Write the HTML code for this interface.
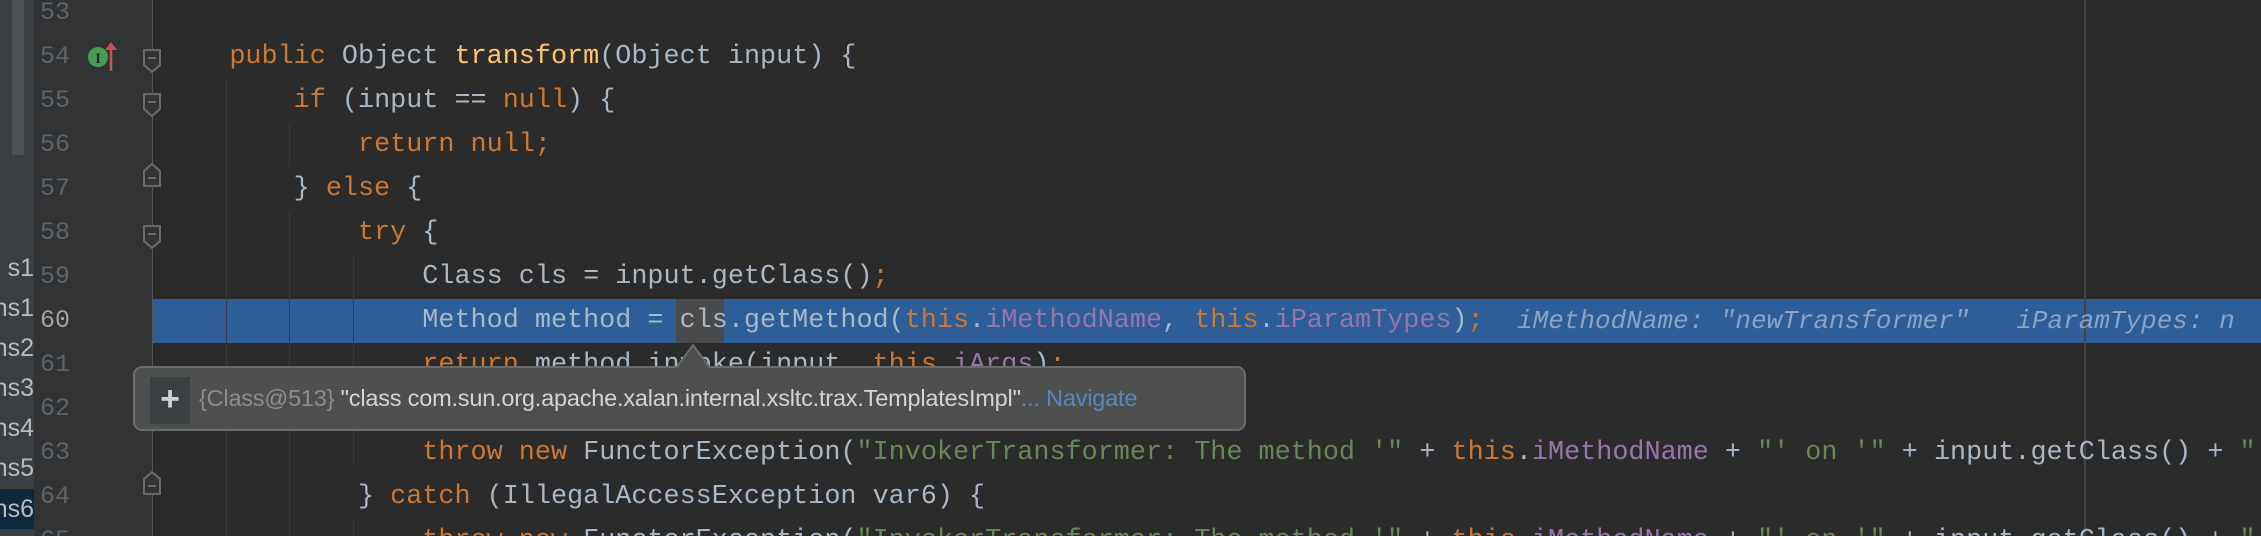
<!DOCTYPE html>
<html><head><meta charset="utf-8">
<style>
html,body{margin:0;padding:0;}
body{width:2261px;height:536px;overflow:hidden;background:#2b2b2b;position:relative;font-family:"Liberation Mono",monospace;}
#wrap{position:absolute;left:0;top:0;width:2261px;height:536px;overflow:hidden;}
#panel{position:absolute;left:0;top:0;width:34px;height:536px;background:#3c3f41;overflow:hidden;}
#panel .sb{position:absolute;left:12px;top:0;width:12px;height:155px;background:#4e5254;}
#panel .it{position:absolute;right:0;height:40px;line-height:40px;font-family:"Liberation Sans",sans-serif;font-size:25px;color:#bbbbbb;white-space:nowrap;}
#gutter{position:absolute;left:34px;top:0;width:118px;height:536px;background:#313335;}
.ln{position:absolute;left:40px;width:40px;text-align:left;font-size:25px;color:#606366;line-height:44px;height:44px;}
.fold{position:absolute;left:152px;top:0;width:1px;height:536px;background:#555555;}
.code{position:absolute;left:165px;font-size:26.8px;line-height:44px;height:44px;white-space:pre;color:#a9b7c6;}
.k{color:#cc7832}.m{color:#ffc66d}.f{color:#9876aa}.s{color:#6a8759}
.guide{position:absolute;width:1px;background:#393939;}
.hl{position:absolute;left:153px;top:299px;width:2108px;height:44px;background:#2d5e98;}
.hint{position:absolute;font-size:26px;font-style:italic;color:#8ea3c2;line-height:44px;white-space:pre;}
#tip{position:absolute;left:133px;top:366px;width:1113px;height:65px;background:#4e5050;border:2px solid #6b6d6d;border-radius:9px;box-sizing:border-box;}
#tip .plus{position:absolute;left:15px;top:9px;width:40px;height:47px;background:#3c3f41;color:#cfd0d0;font-family:"Liberation Sans",sans-serif;font-size:34px;line-height:45px;text-align:center;font-weight:bold;}
#tip .txt{position:absolute;left:64px;top:0;line-height:61px;font-family:"Liberation Sans",sans-serif;font-size:23.5px;color:#d4d4d4;white-space:nowrap;letter-spacing:-0.2px;}
</style></head><body>
<div id="wrap">
<div id="panel">
<div class="sb"></div>
<div class="it" style="top:248px">s1</div>
<div class="it" style="top:288px">ns1</div>
<div class="it" style="top:328px">ns2</div>
<div class="it" style="top:368px">ns3</div>
<div class="it" style="top:408px">ns4</div>
<div class="it" style="top:448px">ns5</div>
<div class="it" style="top:489px;left:0;right:auto;width:34px;background:#0d293e;direction:rtl;text-align:left">ns6</div>
</div>
<div id="gutter"></div>
<div class="hl"></div>
<div style="position:absolute;left:676px;top:299px;width:48px;height:44px;background:#4a4a4a"></div>
<div class="fold"></div>
<div class="guide" style="left:226px;top:79px;height:457px"></div>
<div class="guide" style="left:289px;top:123px;height:44px"></div>
<div class="guide" style="left:289px;top:211px;height:325px"></div>
<div class="guide" style="left:353px;top:255px;height:211px"></div>
<div class="guide" style="left:353px;top:519px;height:17px"></div>
<div style="position:absolute;left:2084px;top:0;width:2px;height:536px;background:#454545"></div>

<div class="ln" style="top:-9px">53</div>
<div class="ln" style="top:35px">54</div>
<div class="ln" style="top:79px">55</div>
<div class="ln" style="top:123px">56</div>
<div class="ln" style="top:167px">57</div>
<div class="ln" style="top:211px">58</div>
<div class="ln" style="top:255px">59</div>
<div class="ln" style="top:299px;color:#a4a3a3">60</div>
<div class="ln" style="top:343px">61</div>
<div class="ln" style="top:387px">62</div>
<div class="ln" style="top:431px">63</div>
<div class="ln" style="top:475px">64</div>
<div class="ln" style="top:519px">65</div>

<svg style="position:absolute;left:0;top:0" width="200" height="536">
<circle cx="98" cy="57" r="10" fill="#499c54"/>
<text x="98" y="63" font-family="Liberation Serif,serif" font-size="15" font-weight="bold" fill="#2b2b2b" text-anchor="middle">I</text>
<path d="M111 71V46" stroke="#c75450" stroke-width="2.5"/><path d="M105 50L111 42L117 50Z" fill="#c75450"/>
<g fill="#313335" stroke="#6a6a6a" stroke-width="2">
<path d="M144 50h16v15l-8 7l-8-7z"/><path d="M148 58h8"/>
<path d="M144 94h16v15l-8 7l-8-7z"/><path d="M148 102h8"/>
<path d="M144 186h16v-15l-8-7l-8 7z"/><path d="M148 178h8"/>
<path d="M144 226h16v15l-8 7l-8-7z"/><path d="M148 234h8"/>
<path d="M144 494h16v-15l-8-7l-8 7z"/><path d="M148 486h8"/>
</g>
</svg>

<div class="code" style="top:35px">    <span class="k">public</span> Object <span class="m">transform</span>(Object input) {</div>
<div class="code" style="top:79px">        <span class="k">if</span> (input == <span class="k">null</span>) {</div>
<div class="code" style="top:123px">            <span class="k">return null;</span></div>
<div class="code" style="top:167px">        } <span class="k">else</span> {</div>
<div class="code" style="top:211px">            <span class="k">try</span> {</div>
<div class="code" style="top:255px">                Class cls = input.getClass()<span class="k">;</span></div>
<div class="code" style="top:299px">                Method method = cls.getMethod(<span class="k">this</span>.<span class="f">iMethodName</span>, <span class="k">this</span>.<span class="f">iParamTypes</span>)<span class="k">;</span></div>
<div class="hint" style="left:1517px;top:299px">iMethodName: "newTransformer"   iParamTypes: n</div>
<div class="code" style="top:343px">                <span class="k">return</span> method.invoke(input, <span class="k">this</span>.<span class="f">iArgs</span>)<span class="k">;</span></div>
<div class="code" style="top:431px">                <span class="k">throw new</span> FunctorException(<span class="s">"InvokerTransformer: The method '"</span> + <span class="k">this</span>.<span class="f">iMethodName</span> + <span class="s">"' on '"</span> + input.getClass() + <span class="s">"'</span></div>
<div class="code" style="top:475px">            } <span class="k">catch</span> (IllegalAccessException var6) {</div>
<div class="code" style="top:519px">                <span class="k">throw new</span> FunctorException(<span class="s">"InvokerTransformer: The method '"</span> + <span class="k">this</span>.<span class="f">iMethodName</span> + <span class="s">"' on '"</span> + input.getClass() + <span class="s">"'</span></div>

<div id="tip">
<div class="plus">+</div>
<div class="txt"><span style="color:#8e8e8e">{Class@513}</span> "class com.sun.org.apache.xalan.internal.xsltc.trax.TemplatesImpl"<span style="color:#5b86c0">... Navigate</span></div>
</div>
<svg style="position:absolute;left:676px;top:343px" width="36" height="26"><path d="M0 25L17 2L34 25" fill="#4e5050" stroke="#6b6d6d" stroke-width="2"/></svg>
</div>
</body></html>
